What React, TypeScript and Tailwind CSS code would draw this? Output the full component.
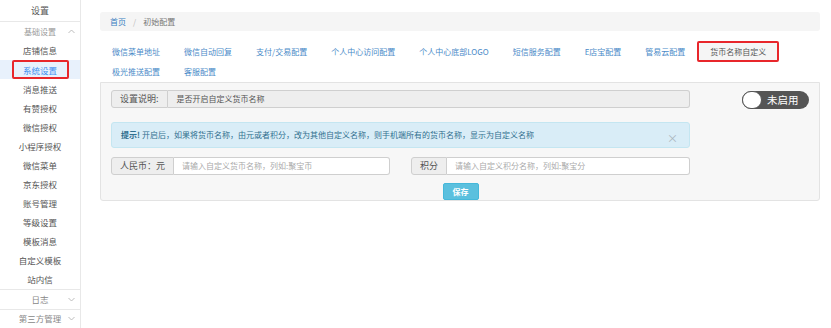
import React from "react";

const F = { fontFamily: '"Noto Sans CJK SC", "Noto Sans", sans-serif' } as const;

const items = [
  "店铺信息",
  "系统设置",
  "消息推送",
  "有赞授权",
  "微信授权",
  "小程序授权",
  "微信菜单",
  "京东授权",
  "账号管理",
  "等级设置",
  "模板消息",
  "自定义模板",
  "站内信",
];

const tabs1 = [
  "微信菜单地址",
  "微信自动回复",
  "支付/交易配置",
  "个人中心访问配置",
  "个人中心底部LOGO",
  "短信服务配置",
  "E店宝配置",
  "管易云配置",
];
const tabs2 = ["极光推送配置", "客服配置"];

function Chevron({ up }: { up?: boolean }) {
  return (
    <svg width="7" height="5" viewBox="0 0 7 5" className="absolute right-[5px]">
      <path
        d={up ? "M0.5 4 L3.5 1 L6.5 4" : "M0.5 1 L3.5 4 L6.5 1"}
        fill="none"
        stroke="#b5b5b5"
        strokeWidth="0.9"
      />
    </svg>
  );
}

export default function App() {
  return (
    <div className="flex w-[831px] h-[328px] bg-white overflow-hidden" style={F}>
      {/* Sidebar */}
      <div className="w-[81px] shrink-0 border-r border-[#e8e8e8] flex flex-col">
        <div className="h-[22px] flex items-center justify-center text-[9px] text-[#555] border-b border-[#e8e8e8]">
          设置
        </div>
        <div className="relative h-[19.5px] flex items-center justify-center text-[8px] text-[#999]">
          基础设置
          <Chevron up />
        </div>
        {items.map((t) =>
          t === "系统设置" ? (
            <div key={t} className="h-[19.2px] flex items-center justify-center bg-[#e8f1fc]">
              <span className="w-[57px] h-[19px] flex items-center justify-center border-2 border-[#e8262b] rounded-[2px] text-[8.5px] text-[#3d8ef0]">
                {t}
              </span>
            </div>
          ) : (
            <div key={t} className="h-[19.2px] flex items-center justify-center text-[8.5px] text-[#555]">
              {t}
            </div>
          )
        )}
        <div className="relative h-[19.5px] flex items-center justify-center text-[8.5px] text-[#888] border-t border-[#e8e8e8]">
          日志
          <Chevron />
        </div>
        <div className="relative h-[19.5px] flex items-center justify-center text-[8.5px] text-[#888] border-t border-[#e8e8e8]">
          第三方管理
          <Chevron />
        </div>
      </div>

      {/* Main */}
      <div className="pl-[19px] pr-[11px] pt-[12px] flex-1">
        <div className="h-[19px] bg-[#f5f5f5] rounded-[3px] flex items-center pl-[10px] text-[8px]">
          <span className="text-[#3a7fc1]">首页</span>
          <span className="text-[#bbb] px-[7px]">/</span>
          <span className="text-[#777]">初始配置</span>
        </div>

        <div className="mt-[10px] flex flex-col">
          <div className="flex h-[21px]">
            {tabs1.map((t) => (
              <div key={t} className="px-[12px] flex items-center text-[8px] text-[#4a8ac8]">
                {t}
              </div>
            ))}
            <div className="px-[11px] flex items-center text-[8px] text-[#555] bg-[#f5f5f5] border-2 border-[#e8262b] rounded-[2px]">
              货币名称自定义
            </div>
          </div>
          <div className="flex h-[20px]">
            {tabs2.map((t) => (
              <div key={t} className="px-[12px] flex items-center text-[8px] text-[#4a8ac8]">
                {t}
              </div>
            ))}
          </div>
        </div>

        {/* Panel */}
        <div className="h-[119px] bg-[#f7f7f7] border border-[#e3e3e3] rounded-b-[3px] pl-[10px] pr-[9px] pt-[7px] flex">
          <div className="w-[579px] flex flex-col">
            <div className="flex h-[18px] text-[8px]">
              <div className="px-[8px] flex items-center bg-[#eeeeee] border border-[#cfcfcf] rounded-l-[3px] text-[9px] text-[#555]">
                设置说明:
              </div>
              <div className="flex-1 flex items-center pl-[9px] bg-[#eeeeee] border border-l-0 border-[#cfcfcf] rounded-r-[3px] text-[#555]">
                是否开启自定义货币名称
              </div>
            </div>

            <div className="relative mt-[14px] h-[26px] bg-[#d9edf7] border border-[#c4e6f1] rounded-[3px] flex items-center pl-[9px] text-[8px] text-[#31708f]">
              <span className="font-bold">提示!</span>
              <span className="ml-[2px]">开启后，如果将货币名称，由元或者积分，改为其他自定义名称，则手机端所有的货币名称，显示为自定义名称</span>
              <span className="absolute right-[11px] top-[10px] text-[11px] leading-none text-[#a9b6bd]">×</span>
            </div>

            <div className="mt-[9px] grid grid-cols-2 gap-x-[21px]">
              <div className="flex h-[18px]">
                <div className="px-[8px] flex items-center bg-[#eeeeee] border border-[#cfcfcf] rounded-l-[3px] text-[9px] text-[#555]">
                  人民币：元
                </div>
                <div className="flex-1 flex items-center pl-[8px] bg-white border border-l-0 border-[#cfcfcf] rounded-r-[3px] text-[8px] text-[#aaa]">
                  请输入自定义货币名称，列如:聚宝币
                </div>
              </div>
              <div className="flex h-[18px]">
                <div className="px-[8px] flex items-center bg-[#eeeeee] border border-[#cfcfcf] rounded-l-[3px] text-[9px] text-[#555]">
                  积分
                </div>
                <div className="flex-1 flex items-center pl-[8px] bg-white border border-l-0 border-[#cfcfcf] rounded-r-[3px] text-[8px] text-[#aaa]">
                  请输入自定义积分名称，列如:聚宝分
                </div>
              </div>
            </div>

            <div className="mt-[8px] flex justify-center pl-[120px]">
              <div className="w-[36px] h-[17px] flex items-center justify-center bg-[#5bc0de] border border-[#46b8da] rounded-[2px] text-[8px] text-white font-bold">
                保存
              </div>
            </div>
          </div>

          <div className="flex-1 flex justify-end pr-[1px]">
            <div className="relative w-[67px] h-[18px] mt-[1px] rounded-full bg-[#555] flex items-center">
              <div className="absolute left-0 top-0 w-[20px] h-[18px] rounded-full bg-white border border-[#555]" />
              <span className="ml-[25px] text-[10.5px] text-white leading-none">未启用</span>
            </div>
          </div>
        </div>
      </div>
    </div>
  );
}
